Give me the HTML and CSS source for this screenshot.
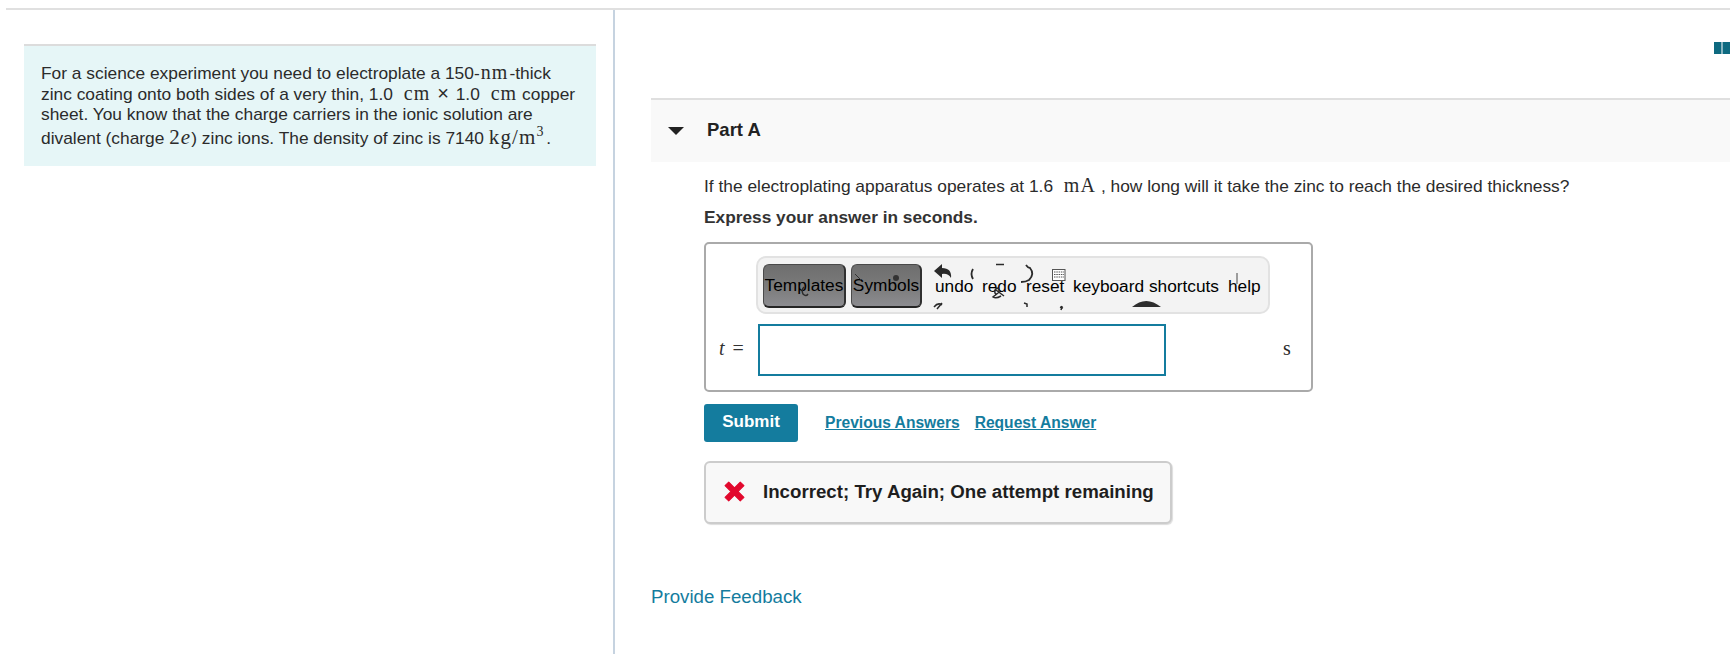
FILE: index.html
```html
<!DOCTYPE html>
<html lang="en">
<head>
<meta charset="utf-8">
<title>Part A</title>
<link rel="stylesheet" href="styles.css">
</head>
<body>
<div class="page">
  <aside class="intro-col">
    <div class="intro">
      <p>For a science experiment you need to electroplate a 150-<span class="m n">nm</span>-thick<br>
      zinc coating onto both sides of a very thin, 1.0 <span class="m u">cm</span> <span class="times">×</span> 1.0 <span class="m u">cm</span> copper<br>
      sheet. You know that the charge carriers in the ionic solution are<br>
      <span class="last">divalent (charge <span class="m big">2<i>e</i></span>) zinc ions. The density of zinc is 7140 <span class="m big unit-kg">kg/m<sup>3</sup></span> .</span></p>
    </div>
  </aside>
  <main class="work-col">
    <div class="top-row">
      <svg class="book" width="16" height="12" viewBox="0 0 16 12"><path d="M0 0h7.500v12H0zM8.500 0H16v12H8.500z" fill="#0e6a80"/></svg>
    </div>
    <section class="part">
      <header class="part-head">
        <span class="caret"></span>
        <h2>Part A</h2>
      </header>
      <div class="part-body">
        <p class="q">If the electroplating apparatus operates at 1.6 <span class="m u">mA</span> , how long will it take the zinc to reach the desired thickness?</p>
        <p class="ins">Express your answer in seconds.</p>
        <div class="answer">
          <div class="tools-row">
            <div class="toolbar">
              <span class="tbtn t1">Templates</span>
              <span class="tbtn t2">Symbols</span>
              <span class="tl l1">undo</span>
              <span class="tl l2">redo</span>
              <span class="tl l3">reset</span>
              <span class="tl l4">keyboard shortcuts</span>
              <span class="tl l5">help</span>
              <svg class="frags" width="513" height="57" viewBox="0 0 513 57">
                <g fill="none" stroke="#2a2a2a" stroke-width="1.500">
                  <path d="M217 13q-3 5 0 10" stroke-width="1.800"/>
                  <path d="M240 8.500h8"/>
                  <path d="M270 9q2 3 4 3q5 6-1 12q-3 2-8 2" stroke-width="1.800"/>
                  <path d="M178 51q4-5 8-2M186 47l-5 6"/>
                  <path d="M268 47l3 1v3M306 50l-1 4M304 51l3 1"/>
                  <path d="M240 39q-3-5 1-7q4 2 1 5l-5 4q3 2 8-1M248 40l-8-6"/>
                  <path d="M48 31q-3 3-1 7q3 3 5 0"/>
                  <path d="M481 17v11" stroke="#444" stroke-width="1"/>
                  <path d="M99 18l6 6" stroke="#333" stroke-width="1"/>
                </g>
                <path d="M178 15l8 -7v4q10 0 9 10q-3-5-9-4v4z" fill="#2a2a2a"/>
                <circle cx="140" cy="22" r="3" fill="#333"/>
                <rect x="296.500" y="13.500" width="12.500" height="11" fill="#fff" stroke="#555"/>
                <path d="M298 16h10M298 18.500h10M298 21h10" stroke="#555" stroke-dasharray="1.500 .8"/>
                <path d="M376 51q14-12 29 0z" fill="#2e2e2e"/>
              </svg>
            </div>
          </div>
          <div class="input-row">
            <span class="var"><i>t</i> =</span>
            <div class="field"></div>
            <span class="unit">s</span>
          </div>
        </div>
        <div class="actions">
          <button class="submit">Submit</button>
          <a class="link">Previous Answers</a>
          <a class="link">Request Answer</a>
        </div>
        <div class="feedback">
          <svg class="x" width="21" height="21" viewBox="0 0 20 20"><path d="M4.500 1L10 6.500 15.500 1 19 4.500 13.500 10l5.500 5.500-3.500 3.500L10 13.500 4.500 19 1 15.500 6.500 10 1 4.500z" fill="#e2082d" stroke="#e2082d" stroke-linejoin="round"/></svg>
          <strong>Incorrect; Try Again; One attempt remaining</strong>
        </div>
      </div>
    </section>
    <a class="provide">Provide Feedback</a>
  </main>
</div>
</body>
</html>
```
FILE: styles.css
```css
* { box-sizing: border-box; }
html, body { margin: 0; height: 654px; overflow: hidden; background: #fff; }
body { font-family: "Liberation Sans", Arial, sans-serif; color: #2a2a2a; padding: 8px 0 0 6px; }
p, h2 { margin: 0; }

.page { display: flex; height: 646px; border-top: 2px solid #e0e0e0; }
.intro-col { width: 609px; flex: none; padding: 34px 0 0 18px; border-right: 2px solid #c6d3e0; }
.intro { width: 572px; height: 122px; background: #e6f6f7; border-top: 2px solid #dcdcdc; padding: 16px 0 0 17px; }
.intro p { font-size: 17.350px; line-height: 20px; white-space: nowrap; color: #2b2b2b; }
.last { display: inline-block; margin-top: 3px; }
.times { margin: 0 2px; font-size: 20px; line-height: 1; }

.m { font-family: "Liberation Serif", serif; font-size: 20px; letter-spacing: 1.100px; line-height: 1; }
.m.n { margin: 0 1px; }
.m.u { margin-left: 6px; }
.m.big { font-size: 21px; }
.m.unit-kg { margin-right: -3px; }
.m i { font-size: 21px; }
sup { font-size: 14px; line-height: 0; }

.work-col { flex: 1; min-width: 0; padding-left: 36px; }
.top-row { height: 88px; display: flex; justify-content: flex-end; align-items: flex-start; padding-top: 32px; }
.book { display: block; }

.part-head { height: 64px; border-top: 2px solid #dfdfdf; background: #f9f9f9; display: flex; align-items: center; padding-left: 17px; }
.caret { width: 0; height: 0; border-left: 8px solid transparent; border-right: 8px solid transparent; border-top: 8px solid #222; }
.part-head h2 { margin-left: 23px; padding-bottom: 2px; font-size: 18.500px; font-weight: 700; color: #222; }

.part-body { padding: 13px 0 0 53px; }
.q { font-size: 17.350px; line-height: 22px; color: #2b2b2b; }
.ins { margin-top: 9px; font-size: 17.300px; font-weight: 700; line-height: 22px; color: #333; }

.answer { margin-top: 14px; width: 609px; height: 150px; border: 2px solid #aaa; border-radius: 5px; padding: 12px 0 0 50px; }
.tools-row { display: flex; }
.toolbar { position: relative; width: 514px; height: 58px; background: #f3f3f3; border: 2px solid #e2e2e2; border-radius: 10px; color: #000; font-size: 17.300px; }
.tbtn { position: absolute; top: 6px; height: 44px; display: flex; align-items: center; justify-content: center; border-radius: 6px; padding-bottom: 1px; background: linear-gradient(#6e6e6e, #7a7a7a 50%, #8c8c90); border: 1px solid #4a4a4a; border-bottom: 2px solid #252525; border-right: 2px solid #303030; white-space: nowrap; }
.t1 { left: 5px; width: 83px; }
.t2 { left: 93px; width: 71px; }
.tl { position: absolute; top: 18px; white-space: nowrap; line-height: 20px; }
.l1 { left: 177px; }
.l2 { left: 224px; }
.l3 { left: 268px; }
.l4 { left: 315px; }
.l5 { left: 470px; }
.frags { position: absolute; left: -2px; top: -2px; pointer-events: none; }

.input-row { display: flex; align-items: center; height: 52px; margin-top: 10px; margin-left: -37px; }
.var { width: 39px; padding-bottom: 3px; font-family: "Liberation Serif", serif; font-size: 20px; word-spacing: 3px; color: #333; white-space: nowrap; }
.field { width: 408px; height: 52px; border: 2px solid #147c9e; background: #fff; flex: none; }
.unit { margin-left: 117px; padding-bottom: 3px; font-family: "Liberation Serif", serif; font-size: 20px; }

.actions { display: flex; align-items: center; margin-top: 12px; height: 38px; }
.submit { width: 94px; height: 38px; border: 0; border-radius: 3px; padding: 0 0 3px; background: #147c9e; color: #fff; font: 700 17px "Liberation Sans", Arial, sans-serif; }
.link { margin-left: 15px; font-size: 15.600px; font-weight: 700; color: #147c9e; text-decoration: underline; }
.actions .submit + .link { margin-left: 27px; }

.feedback { display: flex; align-items: center; margin-top: 19px; width: 468px; height: 63px; background: #f8f8f8; border: 2px solid #ccc; border-radius: 6px; padding: 0 0 2px 18px; box-shadow: 1px 1px 1px #ddd; }
.x { flex: none; }
.feedback strong { margin-left: 18px; font-size: 18.700px; white-space: nowrap; color: #1e1e1e; }

.provide { display: block; margin-top: 62px; font-size: 18.700px; line-height: 22px; color: #147c9e; }
```
